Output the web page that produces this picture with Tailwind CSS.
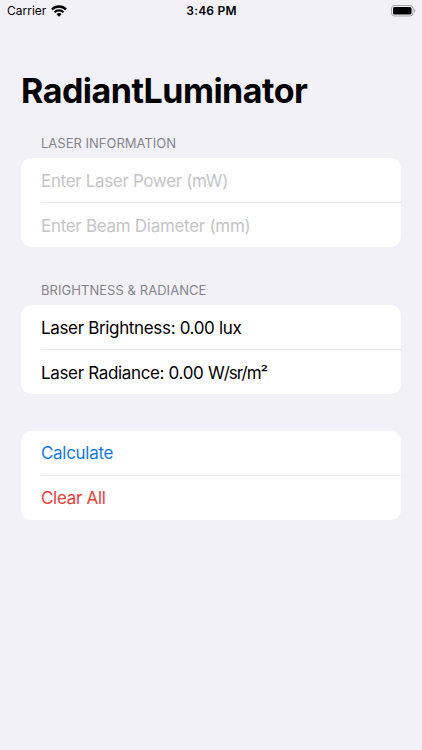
<!DOCTYPE html>
<html lang="en">
  <head>
    <meta charset="UTF-8" />
    <meta name="viewport" content="width=device-width, initial-scale=1.0" />
    <title>RadiantLuminator</title>
    <script src="https://cdn.jsdelivr.net/npm/@tailwindcss/browser@4"></script>
  </head>

  <body class="min-h-screen overflow-hidden bg-[#f2f1f8] font-['Inter',sans-serif] text-black">
    <!-- Status bar -->
    <header class="grid h-[22px] grid-cols-3 items-center pl-[7px] pr-[6px] text-[12px] leading-none">
      <div class="flex items-center gap-[5px]">
        <span>Carrier</span>
        <svg class="h-[12px] w-[16px]" viewBox="0 0 16 12" fill="none" stroke="black" stroke-width="2.3">
          <path d="M1 4.4a9.9 9.9 0 0 1 14 0" />
          <path d="M3.6 7.2a6.2 6.2 0 0 1 8.8 0" />
          <path d="M8 11.8L5.5 9.3a3.6 3.6 0 0 1 5 0z" fill="black" stroke="none" />
        </svg>
      </div>
      <span class="whitespace-nowrap text-center font-semibold tracking-[0.2px]">3:46 PM</span>
      <svg class="h-[12px] w-[25px] justify-self-end" viewBox="0 0 25 12">
        <rect x="0.5" y="0.5" width="21.5" height="10.5" rx="3" fill="none" stroke="#a3a3a8" />
        <rect x="2" y="2" width="18.5" height="7.5" rx="1.6" fill="black" />
        <path d="M23.2 4v3.6c.8-.3 1.2-1 1.2-1.8s-.4-1.5-1.2-1.8z" fill="#a3a3a8" />
      </svg>
    </header>

    <main class="px-[21px] pt-[46px]">
      <h1 class="h-[44px] text-[34px] font-bold leading-[46px] tracking-[-0.5px]">RadiantLuminator</h1>

      <section class="mt-[21px]">
        <h2 class="h-[25px] pl-5 text-[13px] leading-[21px] text-[#85858b]">LASER INFORMATION</h2>
        <div class="h-[89px] rounded-[10px] bg-white pl-5 text-[17px] tracking-[-0.3px] text-[#c5c5c7]">
          <div class="flex h-[45px] items-center border-b border-[#e6e6e9] pt-[3px] tracking-[-0.34px]">Enter Laser Power (mW)</div>
          <div class="flex h-[44px] items-center pt-[3px]">Enter Beam Diameter (mm)</div>
        </div>
      </section>

      <section class="mt-[33px]">
        <h2 class="h-[25px] pl-5 text-[13px] leading-[21px] tracking-[0.05px] text-[#85858b]">BRIGHTNESS &amp; RADIANCE</h2>
        <div class="h-[89px] rounded-[10px] bg-white pl-5 text-[17px]">
          <div class="flex h-[45px] items-center border-b border-[#e6e6e9] pt-[3px] tracking-[-0.34px]">Laser Brightness: 0.00 lux</div>
          <div class="flex h-[44px] items-center whitespace-pre pt-[3px] tracking-[-0.34px]">Laser Radiance: 0.00 <span class="tracking-[-1px]">W/sr/m²</span></div>
        </div>
      </section>

      <section class="mt-[36.5px] h-[89px] rounded-[10px] bg-white pl-5 text-[17px] tracking-[-0.3px]">
        <button class="flex h-[45px] w-full items-center border-b border-[#ededf0] pt-[3px] text-[#1479e8]">Calculate</button>
        <button class="flex h-[44px] w-full items-center pt-[3px] text-[#ea4039]">Clear All</button>
      </section>
    </main>
  </body>
</html>
